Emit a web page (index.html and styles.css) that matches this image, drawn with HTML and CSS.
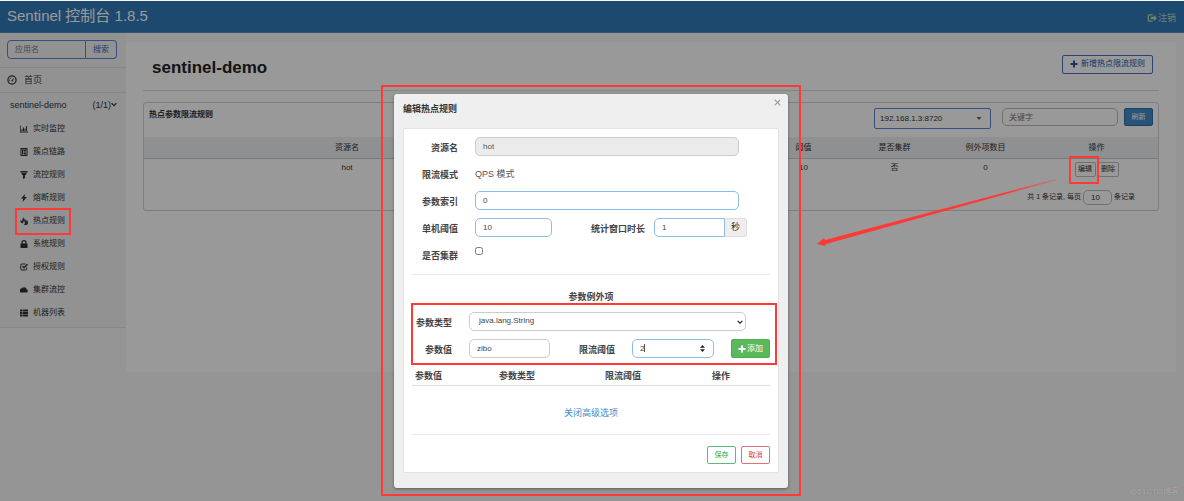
FILE: index.html
```html
<!DOCTYPE html>
<html lang="zh-CN">
<head>
<meta charset="utf-8">
<title>Sentinel 控制台</title>
<link rel="stylesheet" href="styles.css">
</head>
<body>
<header class="topbar">
  <h1 class="brand">Sentinel 控制台 1.8.5</h1>
  <a class="logout" href="#"><svg class="icon-lg" viewBox="0 0 16 16"><path d="M9 3H4Q2 3 2 5v6q0 2 2 2h5" fill="none" stroke="currentColor" stroke-width="2"/><path d="M6 6h5V3l5 5-5 5v-3H6z"/></svg>注销</a>
</header>
<div class="layout">
  <nav class="sidebar">
    <form class="search">
      <input class="search-input" type="text" placeholder="应用名" aria-label="应用名">
      <button class="search-btn" type="button">搜索</button>
    </form>
    <a class="home" href="#"><svg class="icon-lg" viewBox="0 0 16 16"><circle cx="8" cy="8" r="6.5" fill="none" stroke="currentColor" stroke-width="2"/><path d="M6.500 9.500 11.500 4 9 10.500z"/><path d="M3.500 7.500h1.500v1.500H3.500zM5 4.500h1.500V6H5z"/></svg>首页</a>
    <a class="app" href="#"><span>sentinel-demo</span><span class="app-count">(1/1)<svg class="chev" viewBox="0 0 10 10"><path d="M1 2l4 4 4-4" fill="none" stroke="currentColor" stroke-width="2"/></svg></span></a>
    <ul class="menu">
      <li><a href="#"><svg class="icon" viewBox="0 0 16 16"><path d="M0 1h1.500v12H16v2H0zM3 8h2v4H3zM6 5h2v7H6zM9 7h2v5H9zM12 2h2v10h-2z"/></svg>实时监控</a></li>
      <li><a href="#"><svg class="icon" viewBox="0 0 16 16"><path fill-rule="evenodd" d="M1 0h14v16H1zM3 3v11h10V3z"/><path d="M4 4h2v9H4zM7 4h5v2H7zM7 7h5v2H7zM7 10h5v3H7z"/></svg>簇点链路</a></li>
      <li><a href="#"><svg class="icon" viewBox="0 0 16 16"><path d="M1 0h14v2H1zM1 3h14l-5 6v5l-4 2V9z"/></svg>流控规则</a></li>
      <li><a href="#"><svg class="icon" viewBox="0 0 16 16"><path d="M10 0 2 9h4.500L5 16l9-10H9z"/></svg>熔断规则</a></li>
      <li><a href="#"><svg class="icon" viewBox="0 0 16 16"><path d="M6 0c3 4 3 7-1 13-4-1-5-5-3-8 0 2 1 3 2 3 1-3 2-5 2-8zM9 3c3 2 3 4 2 6 1 0 2-1 2-3 4 3 4 8 0 10H8c3-3 2-6 0-8 1-2 1-3 1-5z"/></svg>热点规则</a></li>
      <li><a href="#"><svg class="icon" viewBox="0 0 16 16"><path fill-rule="evenodd" d="M1 7h2V5a5 5 0 0 1 10 0v2h2v9H1zM5.500 7h5V5a2.500 2.500 0 0 0-5 0z"/></svg>系统规则</a></li>
      <li><a href="#"><svg class="icon" viewBox="0 0 16 16"><path d="M11 2H4Q1.500 2 1.500 4.500v7Q1.500 14 4 14h7q2.500 0 2.500-2.500V9" fill="none" stroke="currentColor" stroke-width="2"/><path d="m4 7 2-1.500 2 2L14 1.500 16 3.500 8 11.500z"/></svg>授权规则</a></li>
      <li><a href="#"><svg class="icon" viewBox="0 0 16 16"><path d="M3 13a4 4 0 0 1 0-8Q4 2 7 3a4.200 4.200 0 0 1 6 3.500A3.300 3.300 0 0 1 13 13z"/></svg>集群流控</a></li>
      <li><a href="#"><svg class="icon" viewBox="0 0 16 16"><path d="M0 1h4v4H0zM5 1h11v4H5zM0 6h4v4H0zM5 6h11v4H5zM0 11h4v4H0zM5 11h11v4H5z"/></svg>机器列表</a></li>
    </ul>
  </nav>
  <main class="content">
    <div class="page-head">
      <h2 class="page-title">sentinel-demo</h2>
      <button class="btn-new" type="button"><svg class="icon" viewBox="0 0 16 16"><path d="M6 1h4v5h5v4h-5v5H6v-5H1V6h5z"/></svg>新增热点限流规则</button>
    </div>
    <section class="panel">
      <div class="panel-head">
        <h3 class="panel-title">热点参数限流规则</h3>
        <div class="filters">
          <div class="select-wrap">
            <select class="machine" aria-label="机器"><option>192.168.1.3:8720</option></select>
            <svg class="machine-arrow" viewBox="0 0 10 10"><path d="M0 2h10L5 8z"/></svg>
          </div>
          <input class="keyword" type="text" placeholder="关键字" aria-label="关键字">
          <button class="btn-refresh" type="button">刷新</button>
        </div>
      </div>
      <table class="rules">
        <thead><tr><th class="col-name">资源名</th><th>参数索引</th><th>流控模式</th><th>阈值</th><th>是否集群</th><th>例外项数目</th><th class="col-ops">操作</th></tr></thead>
        <tbody><tr><td class="col-name">hot</td><td>0</td><td>QPS</td><td>10</td><td>否</td><td>0</td><td class="col-ops"><div class="ops"><button type="button" class="btn-op">编辑</button><button type="button" class="btn-op">删除</button></div></td></tr></tbody>
      </table>
      <div class="pager"><label for="size">共 1 条记录, 每页</label><input id="size" class="page-size" type="text" value="10"><span>条记录</span></div>
    </section>
  </main>
</div>

<div class="backdrop">
  <div class="modal" role="dialog" aria-labelledby="dlg-title">
    <div class="modal-head">
      <h2 id="dlg-title" class="modal-title">编辑热点规则</h2>
      <button class="close" type="button" aria-label="关闭"><svg viewBox="0 0 10 10"><path d="M1 1l8 8M9 1l-8 8" stroke="currentColor" stroke-width="1.500"/></svg></button>
    </div>
    <form class="card">
      <div class="rows">
        <div class="row"><label class="lbl" for="res">资源名</label><input id="res" class="field" type="text" value="hot" disabled></div>
        <div class="row"><span class="lbl">限流模式</span><span class="plain">QPS 模式</span></div>
        <div class="row"><label class="lbl" for="idx">参数索引</label><input id="idx" class="field active" type="text" value="0"></div>
        <div class="row row-pair">
          <label class="lbl" for="cnt">单机阈值</label><input id="cnt" class="field active" type="text" value="10">
          <label class="lbl" for="win">统计窗口时长</label><div class="group"><input id="win" class="field active" type="text" value="1"><span class="addon">秒</span></div>
        </div>
        <div class="row"><label class="lbl" for="cluster">是否集群</label><input id="cluster" class="check" type="checkbox"></div>
      </div>
      <hr class="rule">
      <h3 class="sub">参数例外项</h3>
      <div class="rows">
        <div class="row row-type"><label class="lbl" for="type">参数类型</label>
          <div class="select-wrap"><select id="type" class="field"><option>java.lang.String</option></select><svg class="type-arrow" viewBox="0 0 10 10"><path d="M1 3l4 4 4-4" fill="none" stroke="currentColor" stroke-width="2"/></svg></div>
        </div>
        <div class="row row-add">
          <label class="lbl" for="val">参数值</label><input id="val" class="field" type="text" value="zibo">
          <label class="lbl" for="lim">限流阈值</label>
          <div class="select-wrap"><input id="lim" class="field active" type="number" value="2"><i class="caret"></i><svg class="spin" viewBox="0 0 10 10"><path d="M1.500 4 5 0l3.500 4zM1.500 6 5 10l3.500-4z"/></svg></div>
          <button class="btn-add" type="button"><svg class="icon" viewBox="0 0 16 16"><path d="M6 1h4v5h5v4h-5v5H6v-5H1V6h5z"/></svg>添加</button>
        </div>
      </div>
      <table class="items"><thead><tr><th class="c1">参数值</th><th class="c2">参数类型</th><th class="c3">限流阈值</th><th>操作</th></tr></thead></table>
      <a class="advanced" href="#">关闭高级选项</a>
      <hr class="rule">
      <div class="actions"><button class="btn-save" type="button">保存</button><button class="btn-cancel" type="button">取消</button></div>
    </form>
    <div class="mark mark-modal"></div>
    <div class="mark mark-items"></div>
  </div>
</div>
<div class="mark mark-menu"></div>
<div class="mark mark-edit"></div>
<svg class="arrow" viewBox="0 0 240 68"><defs><linearGradient id="fade"><stop offset="0.8" stop-color="#ff3a36"/><stop offset="1" stop-color="#ff3a36" stop-opacity="0.3"/></linearGradient></defs><path d="M0 65 7 59 8 61 239 0 240 1 9 65 8 67z" fill="url(#fade)"/></svg>
<div class="watermark">@51CTO博客</div>
</body>
</html>
```
FILE: styles.css
```css
* { box-sizing: border-box; }
body {
  margin: 0;
  min-height: 100vh;
  padding-top: 1px;
  position: relative;
  background: #f8f8f8;
  color: #333;
  font: 8px/12px "Liberation Sans", "Noto Sans CJK SC", sans-serif;
}
button, input, select { font: inherit; color: inherit; margin: 0; }
button { padding: 0; cursor: pointer; }
h1, h2, h3, ul { margin: 0; padding: 0; }
a { color: inherit; text-decoration: none; }
svg { display: block; fill: currentColor; flex: none; }
.icon { width: 8px; height: 8px; }
.icon-lg { width: 10px; height: 10px; }

.topbar {
  display: flex;
  justify-content: space-between;
  align-items: center;
  height: 32px;
  padding: 0 8px 0 7px;
  background: #337ab7;
  border-bottom: 1px solid #4b8cc4;
}
.brand { font-size: 15px; line-height: 20px; font-weight: 400; color: #fff; padding-bottom: 2px; }
.logout { display: flex; align-items: center; gap: 1px; font-size: 9px; color: #b4dcb4; padding-top: 2px; }

.layout { display: flex; align-items: flex-start; }
.sidebar { flex: none; width: 126px; background: #f3f3f3; border-bottom: 1px solid #e2e2e2; }
.search { display: flex; padding: 7px 9px 8px 7px; }
.search-input {
  flex: 1; min-width: 0; height: 19px; padding: 0 7px;
  border: 1px solid #5c83d8; border-radius: 4px 0 0 4px; background: transparent;
}
.search-input::placeholder, .keyword::placeholder { color: #777; }
.search-btn {
  width: 31px; height: 19px; border: 1px solid #5c83d8; border-left: 0;
  border-radius: 0 4px 4px 0; background: transparent; color: #3c64c0;
}
.home {
  display: flex; align-items: center; gap: 7px; height: 26px; padding-left: 7px;
  border: 1px solid #e2e2e2; border-width: 1px 0; font-size: 9px;
}
.app { display: flex; justify-content: space-between; align-items: center; height: 24px; padding: 0 9px 0 10px; font-size: 9px; }
.app-count { display: flex; align-items: center; }
.chev { width: 6px; height: 6px; }
.menu { list-style: none; padding-bottom: 3px; }
.menu a { display: flex; align-items: center; gap: 5px; height: 23px; padding: 1px 0 0 20px; }

.content { flex: 1; min-width: 0; min-height: 330px; margin: 9px 8px 0 0; padding: 0 17px; background: #fff; }
.page-head {
  display: flex; justify-content: space-between; align-items: center;
  height: 49px; padding: 0 6px 4px 9px; margin-bottom: 11px; border-bottom: 1px solid #ddd;
}
.page-title { font-size: 17px; line-height: 22px; padding-top: 8px; color: #222; }
.btn-new {
  display: flex; align-items: center; justify-content: center; gap: 3px;
  height: 19px; width: 91px; border: 1px solid #4a70c8; border-radius: 2px;
  background: transparent; color: #2857ac;
}
.panel { border: 1px solid #d2d2d2; border-radius: 3px; padding-bottom: 3px; }
.panel-head { display: flex; justify-content: space-between; height: 34px; padding: 5px; }
.panel-title { font-size: 8px; line-height: 14px; }
.filters { display: flex; align-items: flex-start; }
.select-wrap { position: relative; }
.machine {
  appearance: none; display: block; width: 117px; height: 21px; padding: 0 5px; margin-right: 11px;
  border: 1px solid #5c83d8; border-radius: 2px; background: transparent;
}
.machine-arrow { position: absolute; right: 20px; top: 8px; width: 6px; height: 5px; color: #666; }
.keyword { width: 116px; height: 18px; padding: 0 6px; margin-right: 6px; border: 1px solid #bbb; border-radius: 5px; background: transparent; }
.btn-refresh { width: 29px; height: 18px; border: 1px solid #2e6da4; border-radius: 2px; background: #428bca; color: #fff; font-size: 7px; }
.rules { width: 100%; table-layout: fixed; border-collapse: collapse; text-align: center; }
.rules th { width: 91px; height: 21px; padding: 1px 0 0; background: #eff1f3; border-bottom: 1px solid #ccc; font-weight: 400; }
.rules td { height: 29px; padding: 3px 0 0; vertical-align: top; }
.rules .col-name { width: auto; padding-right: 26px; }
.rules .col-ops { width: 127px; padding-left: 4px; }
.ops { display: flex; justify-content: center; gap: 2px; }
.btn-op { width: 21px; height: 15px; border: 1px solid #bbb; border-radius: 2px; background: transparent; font-size: 7px; }
.pager { display: flex; justify-content: flex-end; align-items: center; gap: 2px; height: 20px; padding-right: 23px; font-size: 7px; }
.page-size { width: 29px; height: 15px; padding: 0 4px 0 0; text-align: center; border: 1px solid #bbb; border-radius: 5px; background: transparent; font-size: 8px; }

.backdrop {
  position: absolute; inset: 1px 0 0;
  display: flex; justify-content: center; align-items: flex-start;
  padding: 93px 2px 0 0; background: rgba(0, 0, 0, .4);
}
.modal { position: relative; width: 394px; padding: 0 9px 15px; background: #efefef; border-radius: 3px; box-shadow: 0 1px 3px rgba(0, 0, 0, .4); }
.modal-head { display: flex; justify-content: space-between; height: 34px; padding-top: 9px; }
.modal-title { font-size: 9px; line-height: 12px; }
.close { position: absolute; top: 5px; right: 7px; width: 7px; height: 7px; border: 0; background: none; color: #999; }
.card { padding: 8px; background: #fff; border: 1px solid #e2e2e2; border-radius: 2px; }
.rows { display: grid; gap: 8px; }
.row { display: grid; grid-template-columns: 46px 1fr; column-gap: 17px; padding-right: 31px; height: 19px; align-items: center; }
.lbl { font-size: 9px; font-weight: 700; text-align: right; padding-top: 2px; white-space: nowrap; color: #444; }
.plain { font-size: 9px; color: #555; padding-top: 1px; }
.field {
  display: block; width: 100%; min-width: 0; height: 19px; padding: 0 7px 1px;
  border: 1px solid #ccc; border-radius: 5px; background: #fff; color: #444;
}
.field:disabled { background: #ebebeb; color: #555; }
.field.active { border-color: #8fbce6; }
.row-pair { grid-template-columns: 46px 77px 1fr 85px; padding-right: 23px; }
.group { display: flex; margin-left: -8px; }
.group .field { flex: 1; border-radius: 5px 0 0 5px; }
.addon { width: 22px; height: 19px; line-height: 17px; text-align: center; font-size: 9px; background: #eee; border: 1px solid #ddd; border-left: 0; border-radius: 0 3px 3px 0; }
.check { width: 8px; height: 8px; margin: 0 0 7px; }
.rule { border: 0; border-top: 1px solid #e9e9e9; margin: 10px 0 0; }
.sub { font-size: 9px; line-height: 12px; text-align: center; margin: 16px 0 9px; color: #444; }
.row-type { grid-template-columns: 40px 1fr; padding-right: 24px; }
.row-type .field { appearance: none; padding-left: 9px; }
.type-arrow { position: absolute; right: 3px; top: 7px; width: 6px; height: 6px; color: #222; }
.row-add { grid-template-columns: 40px 81px 1fr 82px 39px; padding-right: 0; }
#lim { appearance: textfield; }
#lim::-webkit-inner-spin-button { display: none; }
.caret { position: absolute; left: 12px; top: 5px; width: 1px; height: 8px; background: #555; }
.spin { position: absolute; right: 8px; top: 6px; width: 7px; height: 7px; color: #222; }
.btn-add { display: flex; align-items: center; justify-content: center; gap: 1px; height: 19px; border: 1px solid #4cae4c; border-radius: 2px; background: #5cb85c; color: #fff; }
.items { width: 100%; margin-top: 7px; table-layout: fixed; border-collapse: collapse; text-align: left; font-size: 9px; color: #444; }
.items th { height: 20px; padding: 2px 0 0 3px; border-bottom: 1px solid #ddd; }
.items .c1 { width: 84px; }
.items .c2 { width: 106px; }
.items .c3 { width: 107px; }
.advanced { display: block; margin: 21px 0 5px; text-align: center; font-size: 9px; color: #428bca; }
.actions { display: flex; justify-content: flex-end; gap: 5px; margin-top: 11px; }
.advanced + .rule { margin-top: 15px; }
.btn-save, .btn-cancel { width: 29px; height: 18px; border: 1px solid #5dbb75; border-radius: 2px; background: #fff; color: #28a745; font-size: 7px; }
.btn-cancel { border-color: #e4707c; color: #dc3545; }

.mark { position: absolute; border: 2px solid #ff3a36; pointer-events: none; }
.mark-modal { inset: -9px -13px -8px; }
.mark-items { left: 17px; right: 11px; top: 209px; height: 62px; }
.mark-menu { left: 15px; top: 208px; width: 56px; height: 27px; }
.mark-edit { right: 85px; top: 156px; width: 30px; height: 28px; }
.arrow { position: absolute; right: 127px; top: 179px; width: 240px; height: 68px; }
.watermark { position: absolute; right: 5px; bottom: 3px; color: rgba(255, 255, 255, .4); text-shadow: 0 0 1px rgba(0, 0, 0, .3); }
```
